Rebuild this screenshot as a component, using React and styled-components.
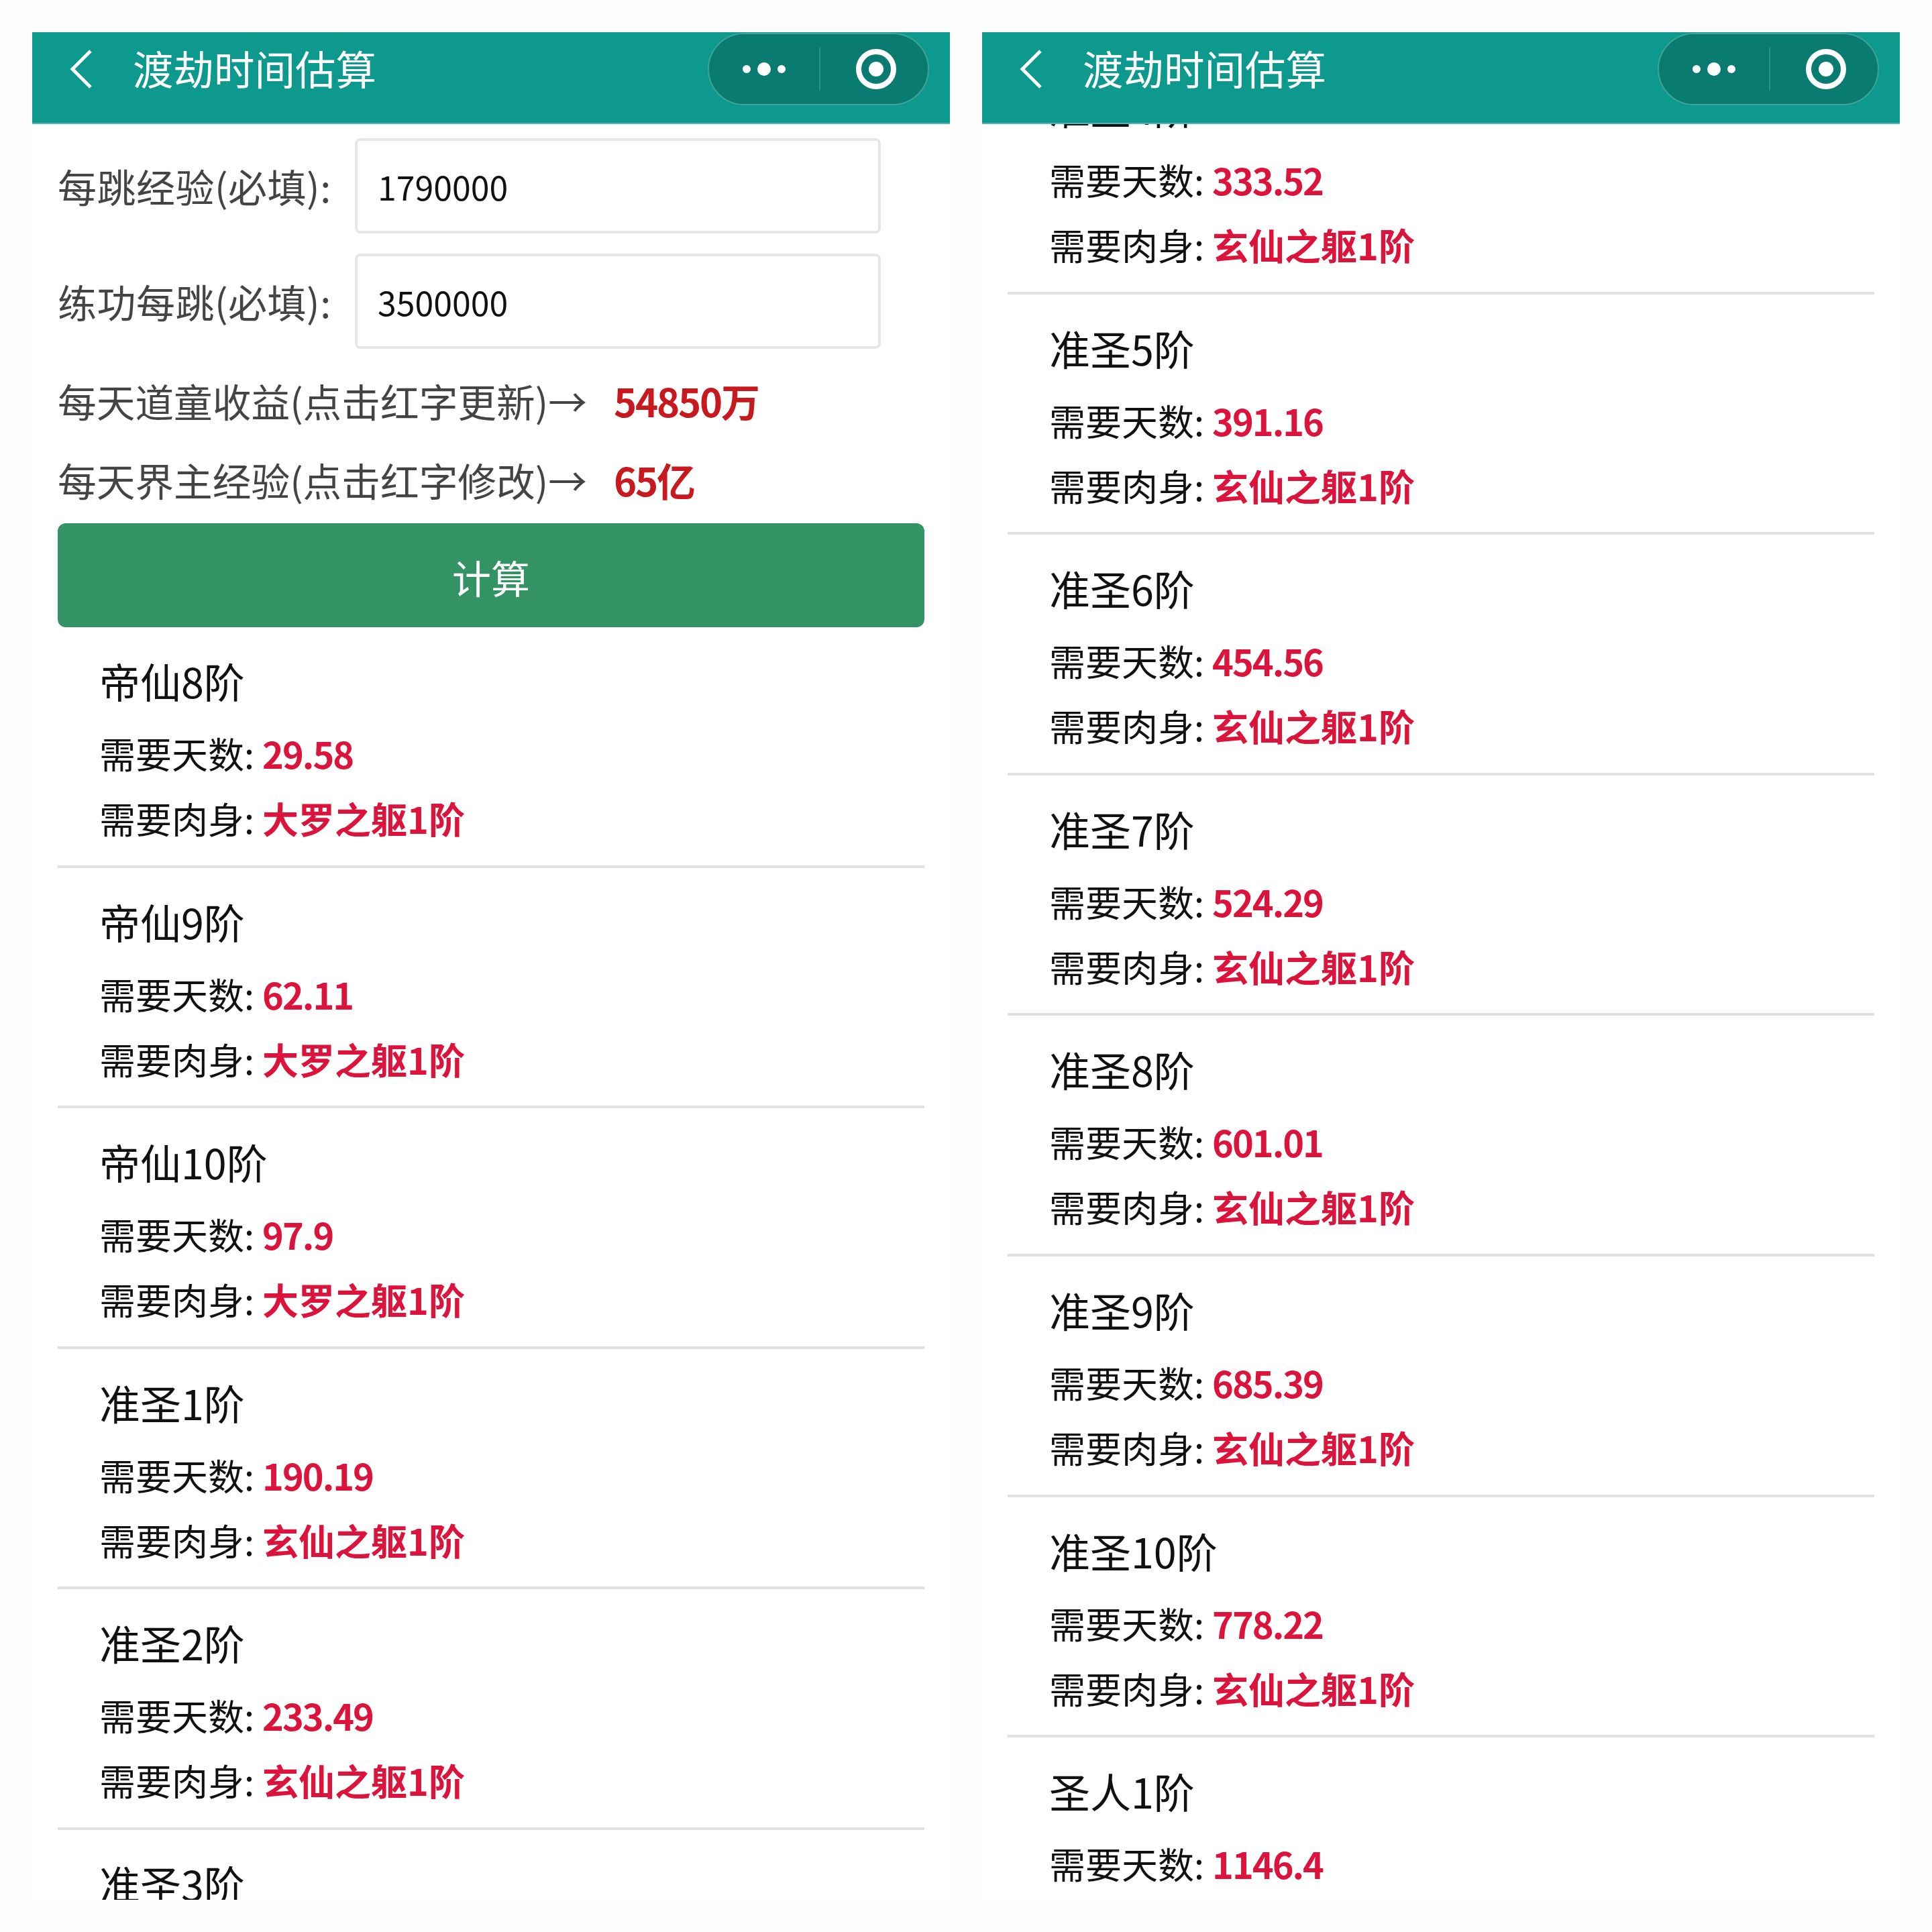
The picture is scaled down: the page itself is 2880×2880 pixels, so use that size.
import React from "react";
import styled, { createGlobalStyle } from "styled-components";

const Global = createGlobalStyle`
  html, body { margin: 0; padding: 0; background: #fcfcfc; }
  * { box-sizing: border-box; }
`;

const Page = styled.div`
  width: 2880px;
  height: 2880px;
  padding: 48px;
  display: grid;
  grid-template-columns: 1368px 1368px;
  column-gap: 48px;
  font-family: "Noto Sans CJK SC", "Noto Sans", sans-serif;
`;
const Phone = styled.section`
  height: 2784px;
  background: #fff;
  overflow: hidden;
  display: flex;
  flex-direction: column;
`;
const NavBar = styled.header`
  flex: none;
  position: relative;
  z-index: 1;
  height: 137px;
  background: #0d998d;
  border-bottom: 2px solid #4db5ab;
  display: flex;
  align-items: center;
  padding: 0 31px 26px 54px;
  color: #fff;
`;
const BackIcon = styled.svg`
  width: 38px;
  height: 60px;
  flex: none;
`;
const NavTitle = styled.h1`
  margin: 0 0 3px 58px;
  flex: 1;
  font-size: 60.5px;
  line-height: 80px;
  font-weight: 400;
`;
const Capsule = styled.div`
  width: 330px;
  height: 108px;
  border-radius: 54px;
  background: #0a7b70;
  border: 2px solid #3fa399;
  display: flex;
  align-items: center;
`;
const MenuCell = styled.div`
  width: 164px;
  height: 64px;
  flex: none;
  display: flex;
  align-items: center;
  justify-content: center;
`;
const RecordCell = styled.div`
  flex: 1;
  height: 64px;
  display: flex;
  align-items: center;
  justify-content: center;
  border-left: 2px solid #2d9187;
  padding-left: 6px;
`;
const Body = styled.main`
  flex: 1;
  min-height: 0;
  overflow: hidden;
  padding: 0 38px;
`;
const Form = styled.div`
  padding-top: 21px;
`;
const FieldRow = styled.div`
  display: flex;
  align-items: center;
  height: 142px;
  margin-bottom: 30px;
`;
const FieldLabel = styled.label`
  width: 443px;
  flex: none;
  font-size: 58px;
  line-height: 72px;
  letter-spacing: 0.5px;
  color: #444;
`;
const Input = styled.div`
  width: 784px;
  height: 142px;
  border: 4px solid #e6e6e6;
  border-radius: 8px;
  padding-left: 30px;
  display: flex;
  align-items: center;
  font-size: 50px;
  color: #111;
`;
const InfoRow = styled.div`
  display: flex;
  align-items: center;
  height: 72px;
  margin-bottom: 46px;
  margin-top: ${(p) => p.$top || 0}px;
  font-size: 57.7px;
  color: #444;
  white-space: nowrap;
`;
const InfoLabel = styled.span`
  width: 829px;
  flex: none;
`;
const InfoValue = styled.span`
  font-size: 58px;
  font-weight: 700;
  letter-spacing: -2.2px;
  color: #c8191e;
`;
const PrimaryButton = styled.div`
  height: 155px;
  margin-top: -17px;
  padding-top: 5px;
  border-radius: 12px;
  background: #349365;
  color: #fff;
  font-size: 58px;
  display: flex;
  align-items: center;
  justify-content: center;
`;
const List = styled.div`
  margin-top: ${(p) => p.$offset || 0}px;
`;
const Item = styled.article`
  height: 358.6px;
  padding: 40px 0 0 62px;
  border-bottom: 4px solid #e0e0e0;
  color: #111;
`;
const ItemTitle = styled.div`
  font-size: 61px;
  line-height: 80px;
  margin-bottom: 32px;
`;
const ItemLine = styled.div`
  font-size: 54px;
  line-height: 72px;
  margin-bottom: 25px;
  white-space: nowrap;
`;
const ItemValue = styled.span`
  color: #dc143c;
  font-weight: 700;
  letter-spacing: ${(p) => (p.$numeric ? "-2px" : "0")};
`;

const left = [
  ["帝仙8阶", "29.58", "大罗之躯1阶"],
  ["帝仙9阶", "62.11", "大罗之躯1阶"],
  ["帝仙10阶", "97.9", "大罗之躯1阶"],
  ["准圣1阶", "190.19", "玄仙之躯1阶"],
  ["准圣2阶", "233.49", "玄仙之躯1阶"],
  ["准圣3阶"],
];
const right = [
  ["准圣4阶", "333.52", "玄仙之躯1阶"],
  ["准圣5阶", "391.16", "玄仙之躯1阶"],
  ["准圣6阶", "454.56", "玄仙之躯1阶"],
  ["准圣7阶", "524.29", "玄仙之躯1阶"],
  ["准圣8阶", "601.01", "玄仙之躯1阶"],
  ["准圣9阶", "685.39", "玄仙之躯1阶"],
  ["准圣10阶", "778.22", "玄仙之躯1阶"],
  ["圣人1阶", "1146.4"],
];

const Nav = () => (
  <NavBar>
    <BackIcon viewBox="0 0 38 60">
      <path d="M33 3 L6 30 L33 57" fill="none" stroke="#fff" strokeWidth="5" />
    </BackIcon>
    <NavTitle>渡劫时间估算</NavTitle>
    <Capsule>
      <MenuCell>
        <svg width="72" height="24" viewBox="0 0 72 24">
          <circle cx="10" cy="12" r="6" fill="#fff" />
          <circle cx="36" cy="12" r="10" fill="#fff" />
          <circle cx="62" cy="12" r="6" fill="#fff" />
        </svg>
      </MenuCell>
      <RecordCell>
        <svg width="64" height="64" viewBox="0 0 64 64">
          <circle cx="32" cy="32" r="26" fill="none" stroke="#fff" strokeWidth="8" />
          <circle cx="32" cy="32" r="11" fill="#fff" />
        </svg>
      </RecordCell>
    </Capsule>
  </NavBar>
);

const Results = ({ items, offset }) => (
  <List $offset={offset}>
    {items.map(([title, days, body]) => (
      <Item key={title}>
        <ItemTitle>{title}</ItemTitle>
        {days && (
          <ItemLine>
            需要天数: <ItemValue $numeric>{days}</ItemValue>
          </ItemLine>
        )}
        {body && (
          <ItemLine>
            需要肉身: <ItemValue>{body}</ItemValue>
          </ItemLine>
        )}
      </Item>
    ))}
  </List>
);

export default function App() {
  return (
    <>
      <Global />
      <Page>
        <Phone>
          <Nav />
          <Body>
            <Form>
              <FieldRow>
                <FieldLabel>每跳经验(必填):</FieldLabel>
                <Input>1790000</Input>
              </FieldRow>
              <FieldRow>
                <FieldLabel>练功每跳(必填):</FieldLabel>
                <Input>3500000</Input>
              </FieldRow>
              <InfoRow $top={41}>
                <InfoLabel>每天道童收益(点击红字更新)→</InfoLabel>
                <InfoValue>54850万</InfoValue>
              </InfoRow>
              <InfoRow>
                <InfoLabel>每天界主经验(点击红字修改)→</InfoLabel>
                <InfoValue>65亿</InfoValue>
              </InfoRow>
              <PrimaryButton>计算</PrimaryButton>
            </Form>
            <Results items={left} />
          </Body>
        </Phone>
        <Phone>
          <Nav />
          <Body>
            <Results items={right} offset={-105} />
          </Body>
        </Phone>
      </Page>
    </>
  );
}
